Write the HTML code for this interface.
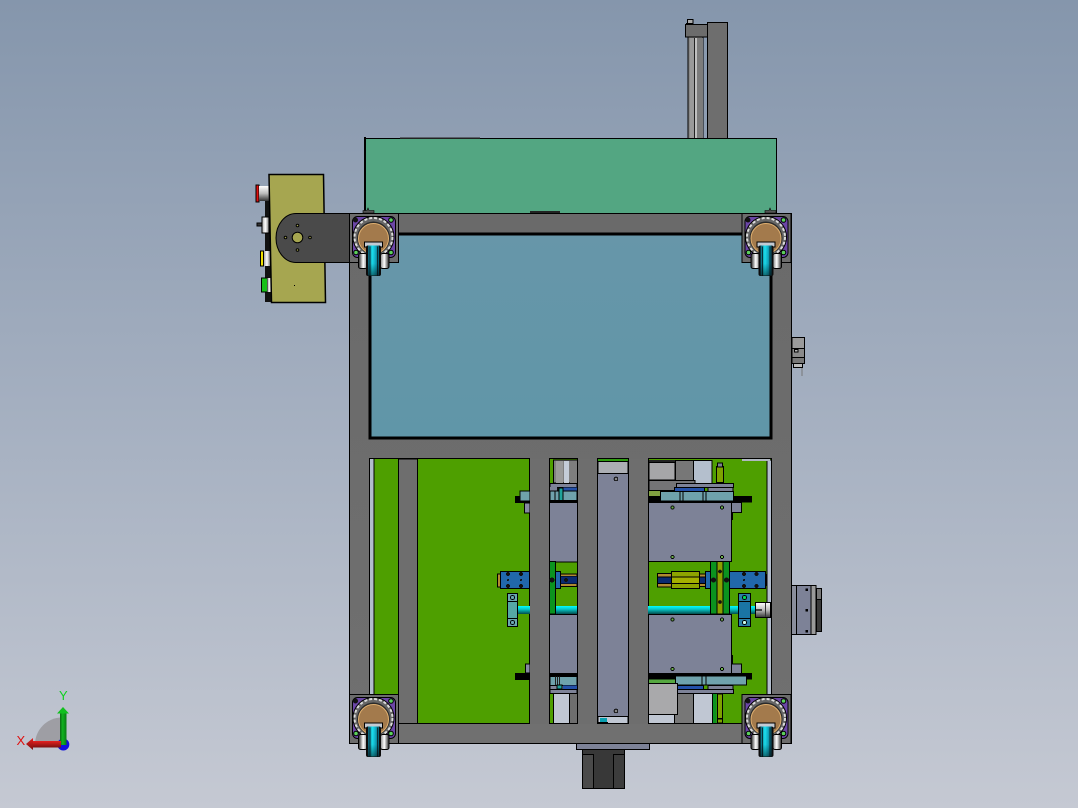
<!DOCTYPE html>
<html>
<head>
<meta charset="utf-8">
<style>
html,body{margin:0;padding:0;width:1078px;height:808px;overflow:hidden;background:#a5afbf}
svg{display:block}
.k{stroke:#000;stroke-width:1}
.t{font-family:"Liberation Sans",sans-serif;font-size:13px}
</style>
</head>
<body>
<svg width="1078" height="808" viewBox="0 0 1078 808" xmlns="http://www.w3.org/2000/svg">
<defs>
<linearGradient id="bg" x1="0" y1="0" x2="0" y2="1">
<stop offset="0" stop-color="#8596ac"/><stop offset=".5" stop-color="#a4afc0"/><stop offset="1" stop-color="#c5c9d3"/>
</linearGradient>
<linearGradient id="hub" x1="0" y1="0" x2="1" y2="0">
<stop offset="0" stop-color="#222"/><stop offset=".55" stop-color="#fff"/><stop offset="1" stop-color="#888"/>
</linearGradient>
<linearGradient id="hub2" x1="0" y1="0" x2="1" y2="0">
<stop offset="0" stop-color="#888"/><stop offset=".45" stop-color="#fff"/><stop offset="1" stop-color="#222"/>
</linearGradient>
<linearGradient id="cy" x1="0" y1="0" x2="1" y2="0">
<stop offset="0" stop-color="#0a5a70"/><stop offset=".4" stop-color="#1be4f4"/><stop offset=".65" stop-color="#12b4cc"/><stop offset="1" stop-color="#0a5a70"/>
</linearGradient>
<linearGradient id="fade" x1="0" y1="0" x2="0" y2="1">
<stop offset="0" stop-color="#000" stop-opacity="0"/><stop offset=".6" stop-color="#000" stop-opacity=".05"/><stop offset="1" stop-color="#000" stop-opacity=".5"/>
</linearGradient>
<linearGradient id="cyv" x1="0" y1="0" x2="0" y2="1">
<stop offset="0" stop-color="#00ffff"/><stop offset=".4" stop-color="#06c8c8"/><stop offset="1" stop-color="#044c4c"/>
</linearGradient>
<linearGradient id="sil" x1="0" y1="0" x2="0" y2="1">
<stop offset="0" stop-color="#fff"/><stop offset=".5" stop-color="#bbb"/><stop offset="1" stop-color="#333"/>
</linearGradient>
<linearGradient id="sil2" x1="0" y1="0" x2="1" y2="0">
<stop offset="0" stop-color="#aaa"/><stop offset=".5" stop-color="#fff"/><stop offset="1" stop-color="#777"/>
</linearGradient>
<linearGradient id="win" x1="0" y1="0" x2="0" y2="1">
<stop offset="0" stop-color="#6796a9"/><stop offset="1" stop-color="#6096a8"/>
</linearGradient>
<linearGradient id="frame" x1="0" y1="0" x2="0" y2="1">
<stop offset="0" stop-color="#6a6a6a"/><stop offset="1" stop-color="#707070"/>
</linearGradient>
<linearGradient id="gr" x1="0" y1="0" x2="1" y2="0">
<stop offset="0" stop-color="#0c6a14"/><stop offset=".4" stop-color="#12b420"/><stop offset="1" stop-color="#0a7a14"/>
</linearGradient>
<linearGradient id="rd" x1="0" y1="0" x2="0" y2="1">
<stop offset="0" stop-color="#e82020"/><stop offset="1" stop-color="#7a1010"/>
</linearGradient>
<g id="caster">
<rect x="0" y="0" width="49" height="49" fill="#6c6c6c" class="k"/>
<rect x="3" y="3" width="43" height="41" rx="5" fill="#6b46a6" class="k"/>
<circle cx="24" cy="23.5" r="20.5" fill="#666" stroke="#000" stroke-width="1"/>
<circle cx="24" cy="23.5" r="19" fill="none" stroke="#dcdcdc" stroke-width="2" stroke-dasharray="3 2"/>
<circle cx="24" cy="24.5" r="16.5" fill="#2a2a2a"/>
<circle cx="24" cy="25" r="15" fill="#a37a4c" stroke="#e0b070" stroke-width="1"/>
<circle cx="6" cy="6.5" r="2.5" fill="#111"/>
<circle cx="41.5" cy="6.5" r="2.3" fill="#5cd05c" stroke="#000"/>
<circle cx="6.5" cy="39" r="2.3" fill="#5cd05c" stroke="#000"/>
<circle cx="41.5" cy="39" r="2.3" fill="#5cd05c" stroke="#000"/>
<rect x="9" y="40" width="8.5" height="15" rx="2" fill="url(#hub)" class="k"/>
<rect x="31" y="40" width="8.5" height="15" rx="2" fill="url(#hub2)" class="k"/>
<rect x="15" y="28.5" width="18" height="5" fill="#c4cad2" class="k"/>
<rect x="16.5" y="32" width="15" height="30.5" rx="2" fill="#0c0c0c"/>
<rect x="18.5" y="32" width="11" height="30" fill="url(#cy)"/>
<rect x="20" y="33" width="1" height="29" fill="#06303a"/>
<rect x="27.5" y="33" width="1" height="29" fill="#06303a"/>
<rect x="18.5" y="32" width="11" height="30" fill="url(#fade)"/>
</g>
</defs>

<rect width="1078" height="808" fill="url(#bg)"/>

<g shape-rendering="crispEdges">
<!-- top column -->
<rect x="688" y="37" width="15" height="102" fill="#888" class="k"/>
<rect x="690" y="38" width="4" height="100" fill="#9a9a9a"/>
<rect x="694" y="38" width="1" height="100" fill="#222"/>
<rect x="695" y="38" width="2" height="100" fill="#c0c0c0"/>
<rect x="697" y="38" width="6" height="100" fill="#7c7c7c"/>
<rect x="707.5" y="22.5" width="20" height="116" fill="#6e6e6e" class="k"/>
<rect x="687.5" y="19.5" width="5.5" height="4" fill="#aaa" class="k"/>
<rect x="686" y="23" width="7" height="2" fill="#000"/>
<rect x="685.5" y="24.5" width="22" height="12.5" fill="#6c6c6c" class="k"/>

<!-- green top panel -->
<rect x="364.5" y="138.5" width="412" height="75" fill="#53a682" class="k"/>
<rect x="364" y="137" width="2" height="76" fill="#000"/>
<rect x="530" y="211" width="30" height="2" fill="#222"/>
<rect x="400" y="137.5" width="80" height="1.5" fill="#222"/>

<!-- frame -->
<rect x="349.5" y="213.5" width="442" height="530" fill="url(#frame)" class="k"/>

<!-- window -->
<rect x="370" y="234" width="401" height="204" fill="url(#win)" stroke="#000" stroke-width="3"/>

<!-- lower openings base -->
<rect x="369.5" y="458.5" width="160" height="265" fill="#4e9f00" class="k"/>
<rect x="370" y="459" width="3.5" height="264" fill="#b2bdcc"/>
<rect x="373.5" y="459" width="1" height="264" fill="#000"/>
<rect x="398.5" y="459" width="19" height="264.5" fill="#6e6e6e" class="k"/>

<rect x="549.5" y="458.5" width="28" height="265" fill="#4e9f00" class="k"/>
<rect x="597.5" y="458.5" width="31" height="265" fill="#7d8297" class="k"/>
<rect x="648.5" y="458.5" width="123" height="265" fill="#4e9f00" class="k"/>

<!-- left opening details -->
<rect x="515" y="496" width="15" height="7" fill="#000"/>
<rect x="520" y="491" width="10" height="10" fill="#6fa2ac" class="k"/>
<rect x="524.5" y="503" width="5.5" height="10" fill="#868aa4" class="k"/>
<rect x="515" y="673" width="15" height="7" fill="#000"/>
<rect x="525.5" y="664" width="4.5" height="9" fill="#868aa4" class="k"/>
<rect x="497.5" y="574" width="4" height="13" fill="#b08a30" class="k"/>
<rect x="500.5" y="571.5" width="29" height="17" fill="#2168ab" class="k"/>
<g fill="#111">
<circle cx="508" cy="574" r="2"/><circle cx="521" cy="574" r="2"/>
<circle cx="508" cy="586" r="2"/><circle cx="521" cy="586" r="2"/>
<circle cx="508" cy="580" r="1"/><circle cx="521" cy="580" r="1"/>
</g>
<rect x="518" y="606" width="12" height="8" fill="url(#cyv)"/>
<rect x="507.5" y="593.5" width="10" height="33" fill="#55a8a6" class="k"/>
<rect x="507.5" y="593.5" width="10" height="8" fill="#6aa8b0" class="k"/>
<rect x="507.5" y="618.5" width="10" height="8" fill="#6aa8b0" class="k"/>
<circle cx="512.5" cy="597.5" r="2" fill="#6aa8b0" stroke="#000"/>
<circle cx="512.5" cy="622.5" r="2" fill="#6aa8b0" stroke="#000"/>

<!-- middle-left opening 549-577 -->
<rect x="553.5" y="460" width="24" height="23" fill="#808080" class="k"/>
<rect x="556" y="461" width="7" height="22" fill="#9a9a9a"/>
<rect x="564" y="461" width="5" height="22" fill="#c4ccd8"/>
<rect x="570" y="461" width="7" height="22" fill="#7e7e7e"/>
<rect x="550" y="483.5" width="27" height="4" fill="#7e8398" class="k"/>
<rect x="550" y="487" width="7" height="4" fill="#7e8398"/>
<rect x="563" y="487.5" width="14" height="4" fill="#2450a8"/>
<rect x="557" y="487.5" width="6" height="4" fill="#111"/>
<rect x="550" y="491" width="27" height="10" fill="#6fa2ac" class="k"/>
<rect x="555" y="491" width="5" height="10" fill="#6fa2ac" class="k"/>
<rect x="559" y="488" width="4" height="13" fill="#1ea39a" class="k"/>
<rect x="550" y="500" width="27" height="3" fill="#000"/>
<rect x="550" y="503" width="27" height="58.5" fill="#7d8297"/>
<rect x="549.5" y="561.5" width="28" height="1" fill="#000"/>
<rect x="555" y="574" width="22" height="2.5" fill="#b08a30" class="k"/>
<rect x="555" y="583.5" width="22" height="3" fill="#b08a30" class="k"/>
<rect x="555" y="576.5" width="22" height="7" fill="#0a2a70"/>
<rect x="549.5" y="561.5" width="6" height="52.5" fill="#0b931f" class="k"/>
<rect x="555.5" y="571.5" width="5" height="17" fill="#2168ab" class="k"/>
<circle cx="552" cy="580" r="2.5" fill="#111"/>
<circle cx="566" cy="580" r="2" fill="#111"/>
<rect x="556" y="606" width="21" height="8" fill="url(#cyv)"/>
<rect x="549.5" y="614.5" width="28" height="59" fill="#7d8297" class="k"/>
<rect x="550" y="673" width="27" height="3.5" fill="#000"/>
<rect x="550" y="676.5" width="27" height="9" fill="#6fa2ac" class="k"/>
<rect x="555" y="676.5" width="1" height="9" fill="#222"/>
<rect x="557" y="676.5" width="1" height="9" fill="#222"/>
<rect x="559" y="676.5" width="1" height="9" fill="#222"/>
<rect x="550" y="685.5" width="27" height="4" fill="#7e8398" class="k"/>
<rect x="563" y="685.5" width="14" height="4" fill="#2450a8"/>
<rect x="557" y="685" width="5" height="4" fill="#1ea39a" class="k"/>
<rect x="550" y="689.5" width="27" height="4" fill="#7e8398" class="k"/>
<rect x="553.5" y="693.5" width="16" height="30" fill="#c0c7d3" class="k"/>
<rect x="569.5" y="693.5" width="8" height="30" fill="#6e6e6e" class="k"/>

<!-- center plate -->
<rect x="598" y="459" width="30" height="2" fill="#2e9a10"/>
<rect x="598" y="461.5" width="30" height="12" fill="#acafb4" class="k"/>
<rect x="598" y="716.5" width="30" height="7" fill="#c0c7d3" class="k"/>
<rect x="600" y="718" width="7" height="5" fill="#0a9fb0"/>
<rect x="598" y="722" width="10" height="2" fill="#000"/>

<!-- right opening -->
<rect x="767" y="460" width="4.5" height="263" fill="#b2bdcc" class="k"/>
<rect x="742" y="459" width="28" height="2" fill="#b0b8c0"/>
<!-- top-right assemblies -->
<rect x="649" y="460" width="26" height="2" fill="#222"/>
<rect x="649" y="462.5" width="26" height="17.5" fill="#a6a6a8" class="k"/>
<rect x="675.5" y="460.5" width="18" height="20" fill="#777" class="k"/>
<rect x="693.5" y="460.5" width="18.5" height="23" fill="#b4bfcd" class="k"/>
<rect x="649" y="480.5" width="46" height="10" fill="#747476" class="k"/>
<rect x="716.5" y="466.5" width="7" height="16" fill="#7da200" class="k"/>
<rect x="717.5" y="463" width="5" height="4" fill="#7a8290" class="k"/>
<rect x="676.5" y="483.5" width="57" height="4" fill="#7d8297" class="k"/>
<rect x="674.5" y="487.5" width="30" height="4" fill="#2450a8" class="k"/>
<rect x="708" y="487.5" width="25" height="4" fill="#7d8297" class="k"/>
<rect x="649" y="491" width="11" height="5" fill="#80a040"/>
<rect x="648" y="496" width="104" height="6.5" fill="#000"/>
<rect x="660.5" y="491.5" width="73" height="9.5" fill="#6fa2ac" class="k"/>
<rect x="680" y="491.5" width="3" height="9.5" fill="#6fa2ac" class="k"/>
<rect x="703" y="491.5" width="3" height="9.5" fill="#6fa2ac" class="k"/>
<rect x="731.5" y="502.5" width="10" height="10" fill="#7d8297" class="k"/>
<rect x="731" y="512" width="2" height="8" fill="#000"/>
<rect x="648.5" y="502.5" width="83" height="59" fill="#7d8297" class="k"/>
<g fill="#6bb04a" stroke="#000">
<circle cx="672.5" cy="507.5" r="1.6"/><circle cx="722" cy="507.5" r="1.6"/>
<circle cx="672.5" cy="557" r="1.6"/><circle cx="722" cy="557" r="1.6"/>
<circle cx="672.5" cy="619.5" r="1.6"/><circle cx="722" cy="619.5" r="1.6"/>
<circle cx="672.5" cy="669" r="1.6"/><circle cx="722" cy="669" r="1.6"/>
</g>
<!-- right-mid -->
<rect x="648" y="606" width="107" height="8" fill="url(#cyv)"/>
<rect x="657.5" y="573.5" width="14" height="3.5" fill="#b08a30" class="k"/>
<rect x="657.5" y="583.5" width="14" height="3.5" fill="#b08a30" class="k"/>
<rect x="657.5" y="577" width="14" height="6.5" fill="#0a2a70" class="k"/>
<rect x="699" y="574" width="7" height="3" fill="#b08a30" class="k"/>
<rect x="699" y="583.5" width="7" height="3" fill="#b08a30" class="k"/>
<rect x="699" y="577" width="7" height="6.5" fill="#0a2a70" class="k"/>
<rect x="671.5" y="571.5" width="28" height="17" fill="#8ea400" class="k"/>
<rect x="672" y="577" width="27" height="6" fill="#a4b000"/>
<rect x="672" y="576.5" width="27" height="1" fill="#000"/>
<rect x="672" y="583" width="27" height="1" fill="#000"/>
<rect x="710.5" y="561.5" width="19" height="52.5" fill="#0b931f" class="k"/>
<rect x="717" y="561.5" width="6" height="52.5" fill="#8aa000" class="k"/>
<rect x="705.5" y="571.5" width="5" height="17" fill="#2168ab" class="k"/>
<rect x="729.5" y="571.5" width="36" height="17" fill="#2168ab" class="k"/>
<rect x="765" y="574" width="2" height="12" fill="#000"/>
<g fill="#111">
<circle cx="713.5" cy="580" r="2.5"/><circle cx="726.5" cy="580" r="2.5"/>
<circle cx="720" cy="571.5" r="1.8"/><circle cx="720" cy="602" r="1.8"/>
<circle cx="744" cy="574" r="2"/><circle cx="756.5" cy="574" r="2"/>
<circle cx="744" cy="586" r="2"/><circle cx="756.5" cy="586" r="2"/>
<circle cx="744" cy="580" r="1"/>
</g>
<rect x="738.5" y="593.5" width="12" height="33" fill="#1a75a5" class="k"/>
<rect x="738.5" y="593.5" width="12" height="8" fill="#2a80a8" class="k"/>
<rect x="738.5" y="618.5" width="12" height="8" fill="#2a80a8" class="k"/>
<circle cx="744.5" cy="597.5" r="2" fill="#0d5" stroke="#000"/>
<circle cx="744.5" cy="622.5" r="2" fill="#cfe" stroke="#000"/>
<rect x="755.5" y="602.5" width="15" height="15" fill="url(#sil)" class="k"/>
<rect x="756" y="609" width="6" height="2" fill="#444"/>
<rect x="765" y="603" width="1" height="14" fill="#333"/>
<rect x="648.5" y="614.5" width="83" height="59" fill="#7d8297" class="k"/>
<g fill="#6bb04a" stroke="#000">
<circle cx="672.5" cy="619.5" r="1.6"/><circle cx="722" cy="619.5" r="1.6"/>
<circle cx="672.5" cy="669" r="1.6"/><circle cx="722" cy="669" r="1.6"/>
</g>
<!-- bottom-right assemblies -->
<rect x="731.5" y="664" width="10" height="9.5" fill="#7d8297" class="k"/>
<rect x="731" y="655" width="2" height="9" fill="#000"/>
<rect x="648" y="673" width="104" height="6.5" fill="#000"/>
<rect x="649" y="679.5" width="26" height="3.5" fill="#55a840"/>
<rect x="675.5" y="676" width="71" height="9" fill="#6fa2ac" class="k"/>
<rect x="702" y="676" width="4" height="9" fill="#6fa2ac" class="k"/>
<rect x="675.5" y="685.5" width="28" height="4" fill="#2450a8" class="k"/>
<rect x="708" y="685.5" width="25" height="4" fill="#7d8297" class="k"/>
<rect x="676.5" y="689.5" width="57" height="4" fill="#7d8297" class="k"/>
<rect x="674.5" y="693.5" width="19" height="30" fill="#777" class="k"/>
<rect x="693.5" y="693.5" width="19" height="30" fill="#c0c7d3" class="k"/>
<rect x="713" y="694" width="3.5" height="29" fill="#0b931f"/>
<rect x="717.5" y="694" width="5" height="29" fill="#7da200" class="k"/>
<rect x="717.5" y="718" width="5" height="1.5" fill="#000"/>
<rect x="648.5" y="683.5" width="29" height="31" fill="#a9a9ab" class="k"/>
<rect x="648.5" y="714.5" width="26" height="9" fill="#c0c7d3" class="k"/>

<!-- vertical frame bars -->
<rect x="530" y="459" width="19" height="265" fill="#6e6e6e"/>
<rect x="578" y="459" width="19" height="265" fill="#6e6e6e"/>
<rect x="629" y="459" width="19" height="265" fill="#6e6e6e"/>

<!-- center plate screw marks -->
<circle cx="616" cy="479" r="1.8" fill="#888" stroke="#000"/>
<circle cx="616" cy="711" r="1.8" fill="#888" stroke="#000"/>

<!-- bottom block -->
<rect x="576.5" y="743.5" width="73" height="6" fill="#7d8297" class="k"/>
<rect x="582.5" y="749.5" width="42" height="39" fill="#383838" class="k"/>
<rect x="582.5" y="754.5" width="11" height="34" fill="#4a4a4a" class="k"/>
<rect x="613.5" y="754.5" width="11" height="34" fill="#3c3c3c" class="k"/>

<!-- right connector -->
<rect x="791.5" y="585.5" width="5" height="49" fill="#8a8e9c" class="k"/>
<rect x="796.5" y="585.5" width="14.5" height="49" fill="#7d8297" class="k"/>
<rect x="811" y="585.5" width="5" height="49" fill="#9a9a9a" class="k"/>
<rect x="816.5" y="588.5" width="5" height="43" fill="#3a3a3a" class="k"/>
<rect x="816.5" y="588.5" width="5" height="11" fill="#777" class="k"/>
<rect x="805.5" y="588.5" width="2.5" height="2.5" fill="#000"/>
<rect x="805.5" y="609" width="2.5" height="2.5" fill="#000"/>
<rect x="805.5" y="630" width="2.5" height="2.5" fill="#000"/>

<!-- right sensor -->
<rect x="792" y="337.5" width="12.5" height="11" fill="#9a9a9a" class="k"/>
<rect x="792" y="348.5" width="12.5" height="9" fill="#8a8a8a" class="k"/>
<rect x="794.5" y="349.5" width="3.5" height="2.5" fill="#bbb" class="k"/>
<rect x="792" y="357.5" width="12.5" height="6" fill="#777" class="k"/>
<rect x="793.5" y="363.5" width="9" height="4" fill="#bbb" class="k"/>
<rect x="801.5" y="368" width="1" height="8" fill="#777"/>

<!-- control box buttons -->
<rect x="265" y="200" width="6" height="102" fill="#111"/>
<rect x="256" y="185" width="3" height="17" fill="#e01010" class="k"/>
<rect x="259" y="186" width="10" height="15" fill="url(#sil)"/>
<rect x="262" y="217" width="7" height="16" fill="url(#sil2)" class="k"/>
<rect x="257" y="223" width="5" height="3" fill="#333" class="k"/>
<rect x="260.5" y="251" width="3" height="15" fill="#f0e000" class="k"/>
<rect x="264" y="251" width="6" height="15" fill="url(#sil2)"/>
<rect x="261.5" y="278" width="6" height="14" fill="#18c018" class="k"/>
<rect x="267.5" y="278" width="5" height="14" fill="url(#sil2)"/>
</g>

<!-- control box -->
<path d="M269 174.5H323.5L325.5 302.5H271.5Z" fill="#a6a650" stroke="#000" stroke-width="1.5"/>
<rect x="294" y="285" width="1" height="1" fill="#000"/>
<path d="M350 213.5H296A20 24.5 0 0 0 296 262.5H350Z" fill="#4a4a4a" stroke="#000"/>
<circle cx="297.5" cy="237.5" r="5.3" fill="#a6a650" stroke="#000"/>
<circle cx="297.5" cy="225.5" r="1.3" fill="#a6a650" stroke="#000"/>
<circle cx="285.5" cy="237.5" r="1.3" fill="#a6a650" stroke="#000"/>
<circle cx="310" cy="237.5" r="1.3" fill="#a6a650" stroke="#000"/>
<circle cx="297.5" cy="250" r="1.3" fill="#a6a650" stroke="#000"/>
<path d="M363 213V210.5H367L368 208L369 210.5H374V213Z" fill="#555" stroke="#000" stroke-width=".6"/>
<path d="M765 213V210.5H769L770 208L771 210.5H776V213Z" fill="#555" stroke="#000" stroke-width=".6"/>

<!-- casters -->
<use href="#caster" x="349.5" y="213.5"/>
<use href="#caster" x="742" y="213.5"/>
<use href="#caster" x="349.5" y="694.5"/>
<use href="#caster" x="742" y="694.5"/>

<!-- axis triad -->
<path d="M62 745V717.5A27 27 0 0 0 35 745Z" fill="#9a9a9e" opacity=".9"/>
<circle cx="63.3" cy="744.5" r="6" fill="#1010e0"/>
<rect x="60" y="713" width="6.5" height="32" fill="url(#gr)"/>
<path d="M63 707L69 713.5H57Z" fill="#12c020"/>
<rect x="33" y="741" width="28" height="6.5" fill="url(#rd)"/>
<path d="M26 744L33 738V750Z" fill="url(#rd)"/>
<text x="16.5" y="745" class="t" fill="#e01010">X</text>
<text x="59" y="700" class="t" fill="#10d020">Y</text>
</svg>
</body>
</html>
